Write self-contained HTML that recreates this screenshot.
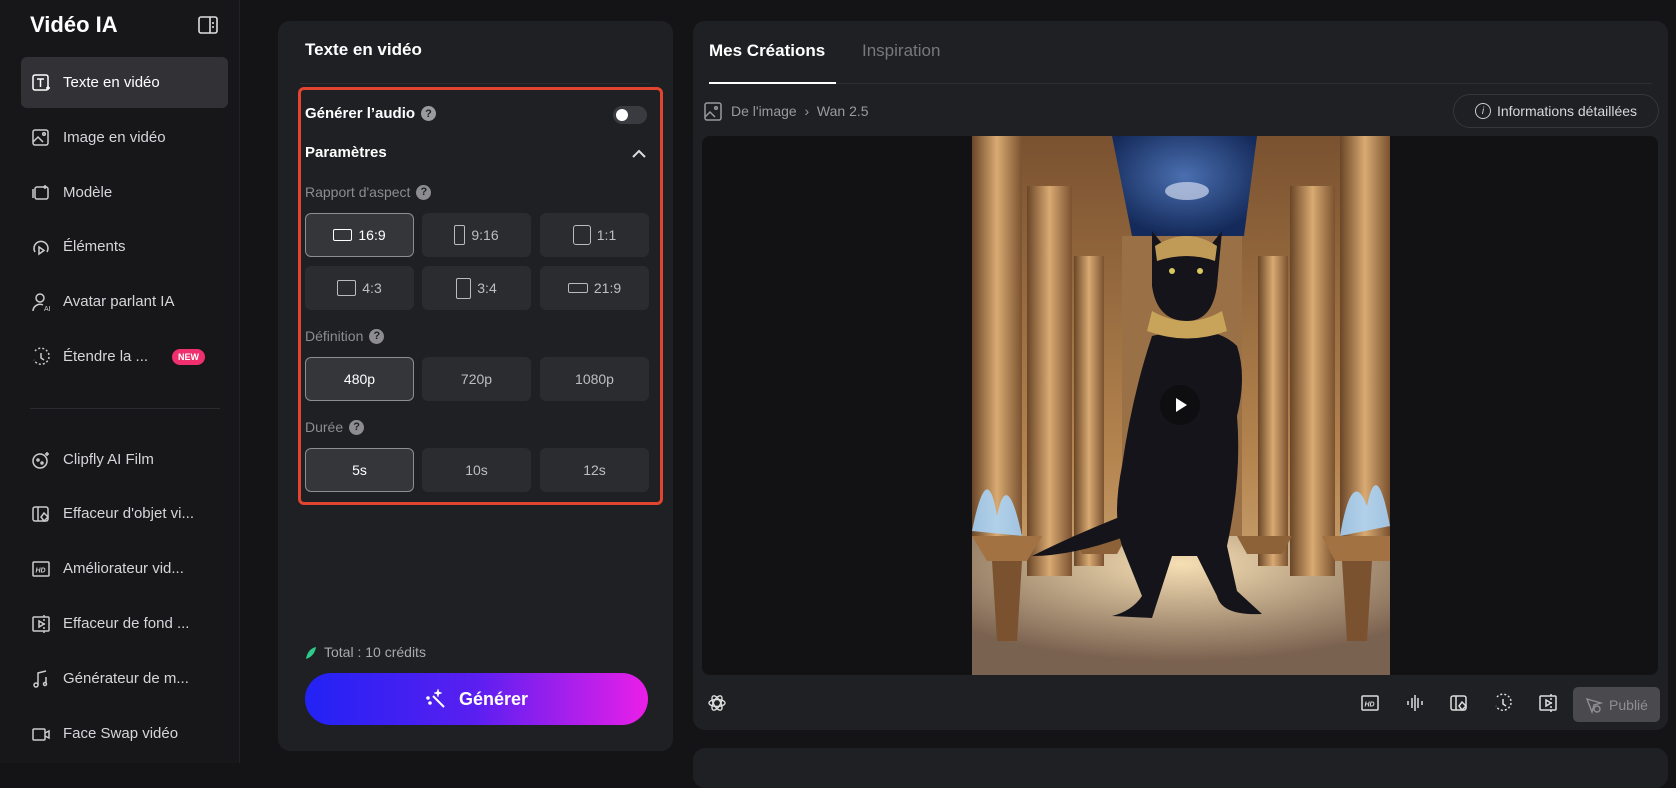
<!DOCTYPE html>
<html><head><meta charset="utf-8"><style>
*{box-sizing:border-box;margin:0;padding:0}
body{width:1676px;height:763px;background:#141417;font-family:"Liberation Sans",sans-serif;color:#e8e8ea;position:relative;overflow:hidden}
.abs{position:absolute}
.side{left:0;top:0;width:240px;height:763px;background:#17171a;border-right:1px solid #222226}
.title{left:30px;top:12px;font-size:22px;font-weight:bold;color:#fff}
.nav{left:21px;width:207px;height:51px;display:flex;align-items:center;font-size:15px;color:#d6d6d9;border-radius:6px}
.nav svg{position:absolute;left:10px;width:20px;height:20px}
.nav span{position:absolute;left:42px}
.panel{background:#1f2023;border-radius:12px}
.btn{position:absolute;width:109px;height:44px;background:#2b2c30;border-radius:6px;display:flex;align-items:center;justify-content:center;font-size:14px;color:#bdbdc2;gap:6px}
.btn.sel{background:#35363a;border:1px solid #8d8d92;color:#fff}
.lbl{position:absolute;left:305px;font-size:14px;color:#8c8c91;display:flex;align-items:center;gap:6px}
.q{display:inline-flex;width:15px;height:15px;border-radius:50%;background:#8c8c91;color:#1f2023;font-size:11px;font-weight:bold;align-items:center;justify-content:center}
.ic{position:absolute;top:693px;width:20px;height:20px}
</style></head><body>
<div class="abs side"></div>
<div class="abs title">Vidéo IA</div>
<svg class="abs" style="left:198px;top:16px" width="20" height="18" viewBox="0 0 20 18" fill="none" stroke="#ddd" stroke-width="1.6"><rect x="1" y="1" width="18" height="16" rx="2"/><line x1="12" y1="1" x2="12" y2="17"/><line x1="15" y1="6" x2="15" y2="8"/><line x1="15" y1="10" x2="15" y2="12"/></svg>

<div class="abs nav" style="top:57px;background:#323236;color:#fff"><svg viewBox="0 0 20 20" fill="none" stroke="#fff" stroke-width="1.5"><rect x="2" y="2" width="15" height="15" rx="2"/><path d="M6 6h7M9.5 6v8"/><path d="M15 15h4M17 13v4"/></svg><span>Texte en vidéo</span></div>
<div class="abs nav" style="top:112px"><svg viewBox="0 0 20 20" fill="none" stroke="#ccc" stroke-width="1.5"><rect x="2" y="2" width="15" height="15" rx="2"/><path d="M2 14l5-5 5 5"/><circle cx="13" cy="6" r="1.3"/></svg><span>Image en vidéo</span></div>
<div class="abs nav" style="top:167px"><svg viewBox="0 0 20 20" fill="none" stroke="#ccc" stroke-width="1.5"><rect x="4" y="4" width="13" height="12" rx="2"/><path d="M2 6v9"/><path d="M14 2v4M12 4h4"/></svg><span>Modèle</span></div>
<div class="abs nav" style="top:221px"><svg viewBox="0 0 20 20" fill="none" stroke="#ccc" stroke-width="1.5"><path d="M4 15a7 7 0 1 1 12 0"/><path d="M8 10v7l5-3.5z"/></svg><span>Éléments</span></div>
<div class="abs nav" style="top:276px"><svg viewBox="0 0 20 20" fill="none" stroke="#ccc" stroke-width="1.5"><circle cx="9" cy="6" r="4"/><path d="M2 19a7 7 0 0 1 10-6"/><text x="13" y="19" font-size="7" fill="#ccc" stroke="none">AI</text></svg><span>Avatar parlant IA</span></div>
<div class="abs nav" style="top:331px"><svg viewBox="0 0 20 20" fill="none" stroke="#ccc" stroke-width="1.5"><path d="M4 4a8 8 0 1 1-1 9" stroke-dasharray="2 2"/><path d="M10 6v5l3 2"/></svg><span>Étendre la ...</span><b style="position:absolute;left:151px;background:#f0306e;color:#fff;font-size:9px;padding:3px 6px;border-radius:9px">NEW</b></div>
<div class="abs" style="left:30px;top:408px;width:190px;height:1px;background:#2c2c30"></div>
<div class="abs nav" style="top:434px"><svg viewBox="0 0 20 20" fill="none" stroke="#ccc" stroke-width="1.5"><circle cx="9" cy="11" r="7"/><circle cx="7" cy="10" r="1"/><circle cx="11" cy="13" r="1"/><path d="M16 2v4M14 4h4"/></svg><span>Clipfly AI Film</span></div>
<div class="abs nav" style="top:488px"><svg viewBox="0 0 20 20" fill="none" stroke="#ccc" stroke-width="1.5"><rect x="2" y="3" width="15" height="14" rx="2"/><path d="M7 3v14"/><path d="M13 9l4 4-4 4-3-4z"/></svg><span>Effaceur d'objet vi...</span></div>
<div class="abs nav" style="top:543px"><svg viewBox="0 0 20 20" fill="none" stroke="#ccc" stroke-width="1.5"><rect x="2" y="3" width="16" height="14" rx="1"/><text x="4.5" y="13.5" font-size="7" font-style="italic" font-weight="bold" fill="#ccc" stroke="none">HD</text></svg><span>Améliorateur vid...</span></div>
<div class="abs nav" style="top:598px"><svg viewBox="0 0 20 20" fill="none" stroke="#ccc" stroke-width="1.5"><rect x="2" y="3" width="16" height="14" rx="1"/><path d="M8 7v6l5-3z"/><path d="M13 1v18" stroke-dasharray="2 2"/></svg><span>Effaceur de fond ...</span></div>
<div class="abs nav" style="top:653px"><svg viewBox="0 0 20 20" fill="none" stroke="#ccc" stroke-width="1.5"><path d="M7 16V4l8-2"/><circle cx="5" cy="16" r="2"/><path d="M15 8v6"/><circle cx="14" cy="15" r="1.5"/></svg><span>Générateur de m...</span></div>
<div class="abs nav" style="top:708px"><svg viewBox="0 0 20 20" fill="none" stroke="#ccc" stroke-width="1.5"><rect x="2" y="5" width="12" height="11" rx="1"/><path d="M14 9l4-2v7l-4-2"/></svg><span>Face Swap vidéo</span></div>

<div class="abs panel" style="left:278px;top:21px;width:395px;height:730px"></div>
<div class="abs" style="left:305px;top:40px;font-size:17px;font-weight:bold;color:#fff">Texte en vidéo</div>
<div class="abs" style="left:300px;top:83px;width:350px;height:1px;background:#2e2e32"></div>
<div class="abs" style="left:298px;top:87px;width:365px;height:418px;border:3px solid #e2442f;border-radius:6px"></div>
<div class="abs" style="left:305px;top:105px;font-size:15px;font-weight:bold;color:#fff;display:flex;align-items:center;gap:6px">Générer l’audio <span class="q" style="background:#9a9a9f">?</span></div>
<div class="abs" style="left:613px;top:106px;width:34px;height:18px;border-radius:9px;background:#3a3b40"><div style="position:absolute;left:3px;top:3px;width:12px;height:12px;border-radius:50%;background:#fff"></div></div>
<div class="abs" style="left:305px;top:144px;font-size:15px;font-weight:bold;color:#fff">Paramètres</div>
<svg class="abs" style="left:631px;top:148px" width="16" height="12" viewBox="0 0 16 12" fill="none" stroke="#ddd" stroke-width="2"><path d="M2 9l6-6 6 6"/></svg>
<div class="lbl" style="top:184px">Rapport d'aspect <span class="q">?</span></div>
<div class="btn sel" style="left:305px;top:213px"><span style="width:19px;height:12px;border:1.5px solid #fff;border-radius:2px"></span>16:9</div>
<div class="btn" style="left:422px;top:213px"><span style="width:11px;height:20px;border:1.5px solid #bbb;border-radius:2px"></span>9:16</div>
<div class="btn" style="left:540px;top:213px"><span style="width:18px;height:20px;border:1.5px solid #bbb;border-radius:3px"></span>1:1</div>
<div class="btn" style="left:305px;top:266px"><span style="width:19px;height:16px;border:1.5px solid #bbb;border-radius:2px"></span>4:3</div>
<div class="btn" style="left:422px;top:266px"><span style="width:15px;height:21px;border:1.5px solid #bbb;border-radius:2px"></span>3:4</div>
<div class="btn" style="left:540px;top:266px"><span style="width:20px;height:10px;border:1.5px solid #bbb;border-radius:2px"></span>21:9</div>
<div class="lbl" style="top:328px">Définition <span class="q">?</span></div>
<div class="btn sel" style="left:305px;top:357px">480p</div>
<div class="btn" style="left:422px;top:357px">720p</div>
<div class="btn" style="left:540px;top:357px">1080p</div>
<div class="lbl" style="top:419px">Durée <span class="q">?</span></div>
<div class="btn sel" style="left:305px;top:448px">5s</div>
<div class="btn" style="left:422px;top:448px">10s</div>
<div class="btn" style="left:540px;top:448px">12s</div>
<svg class="abs" style="left:305px;top:646px" width="12" height="14" viewBox="0 0 12 14"><path d="M1 13C2 6 6 2 11 1 10 7 7 11 1 13z" fill="#2fc98a"/></svg>
<div class="abs" style="left:324px;top:644px;font-size:14px;color:#a9a9ae">Total : 10 crédits</div>
<div class="abs" style="left:305px;top:673px;width:343px;height:52px;border-radius:26px;background:linear-gradient(90deg,#2222f4 0%,#5a1ff0 50%,#ea1fe8 100%);display:flex;align-items:center;justify-content:center;gap:12px;font-size:18px;font-weight:bold;color:#fff">
<svg width="22" height="22" viewBox="0 0 22 22" fill="none" stroke="#fff" stroke-width="2"><path d="M8 8l11 11"/><path d="M13 1l1 3 3 1-3 1-1 3-1-3-3-1 3-1z" fill="#fff" stroke-width="0.5"/><circle cx="3" cy="10" r="0.8" fill="#fff"/><circle cx="5" cy="15" r="0.8" fill="#fff"/></svg>Générer</div>

<div class="abs panel" style="left:693px;top:21px;width:975px;height:709px"></div>
<div class="abs" style="left:709px;top:41px;font-size:17px;font-weight:bold;color:#fff">Mes Créations</div>
<div class="abs" style="left:862px;top:41px;font-size:17px;color:#77777c">Inspiration</div>
<div class="abs" style="left:709px;top:83px;width:943px;height:1px;background:#2e2e32"></div>
<div class="abs" style="left:709px;top:82px;width:127px;height:2px;background:#fff"></div>
<svg class="abs" style="left:704px;top:102px" width="20" height="20" viewBox="0 0 20 20" fill="none" stroke="#999" stroke-width="1.5"><rect x="1" y="1" width="16" height="17" rx="2"/><path d="M1 15l5-5 5 5"/><circle cx="12" cy="6" r="1.3"/></svg>
<div class="abs" style="left:731px;top:103px;font-size:14px;color:#9a9a9f">De l'image &nbsp;›&nbsp; Wan 2.5</div>
<div class="abs" style="left:1453px;top:94px;width:206px;height:34px;border:1px solid #35363a;border-radius:17px;display:flex;align-items:center;justify-content:center;gap:6px;font-size:14px;color:#d8d8dc"><span style="width:16px;height:16px;border:1.5px solid #ccc;border-radius:50%;font-size:10px;font-style:italic;display:inline-flex;align-items:center;justify-content:center">i</span>Informations détaillées</div>
<div class="abs" style="left:702px;top:136px;width:956px;height:539px;background:#121215;border-radius:8px;overflow:hidden">
<svg style="position:absolute;left:270px;top:0" width="418" height="539" viewBox="0 0 418 539">
<defs><linearGradient id="bg" x1="0" y1="0" x2="0" y2="1"><stop offset="0" stop-color="#7a5230"/><stop offset=".6" stop-color="#b5854f"/><stop offset="1" stop-color="#d8b98c"/></linearGradient>
<radialGradient id="sky" cx=".5" cy=".4" r=".6"><stop offset="0" stop-color="#4a6fb0"/><stop offset="1" stop-color="#142a5a"/></radialGradient>
<linearGradient id="col" x1="0" x2="1"><stop offset="0" stop-color="#6a4628"/><stop offset=".5" stop-color="#d9aa72"/><stop offset="1" stop-color="#7a5230"/></linearGradient>
<radialGradient id="floor" cx=".5" cy=".2" r=".7"><stop offset="0" stop-color="#f6dfb4"/><stop offset="1" stop-color="#7a6250"/></radialGradient></defs>
<rect width="418" height="539" fill="url(#bg)"/>
<polygon points="140,0 285,0 272,100 160,100" fill="url(#sky)"/>
<ellipse cx="215" cy="55" rx="22" ry="9" fill="#cfd8ee" opacity=".7"/>
<rect x="150" y="100" width="120" height="400" fill="#9a7046"/>
<rect x="0" y="400" width="418" height="139" fill="url(#floor)"/>
<rect x="0" y="0" width="50" height="400" fill="url(#col)"/><rect x="368" y="0" width="50" height="400" fill="url(#col)"/>
<rect x="55" y="50" width="45" height="390" fill="url(#col)"/><rect x="318" y="50" width="45" height="390" fill="url(#col)"/>
<rect x="102" y="120" width="30" height="310" fill="url(#col)"/><rect x="286" y="120" width="30" height="310" fill="url(#col)"/>
<path d="M0 395 Q15 320 25 380 Q35 330 50 400z" fill="#a9d7ff" opacity=".85"/>
<path d="M368 400 Q380 330 395 370 Q405 320 418 390z" fill="#a9d7ff" opacity=".85"/>
<path d="M0 400h70l-15 25h-40z" fill="#a27242"/><path d="M350 400h68v25h-55z" fill="#a27242"/>
<path d="M100 400h55l-10 18h-35z" fill="#8e6238"/><path d="M265 400h55l-10 18h-35z" fill="#8e6238"/>
<path d="M20 425h30l-5 80h-20z" fill="#7a5230"/><path d="M370 425h30l-5 80h-20z" fill="#7a5230"/>
<g fill="#15141a">
<path d="M180 150 L180 95 L200 120 L230 120 L250 95 L245 150 Q240 185 215 185 Q185 185 180 150z"/>
<path d="M180 200 Q160 260 150 330 Q140 380 150 410 L170 460 Q160 475 140 480 L180 482 L200 420 L225 420 L245 460 Q250 480 290 478 L265 455 L255 410 Q270 340 265 280 Q275 240 265 210 Q240 185 180 200z"/>
<path d="M150 380 Q100 400 60 420 Q100 420 155 400z"/>
</g>
<path d="M180 175 Q215 195 250 175 L255 195 Q215 210 175 195z" fill="#c8a35a"/>
<path d="M183 110 Q215 90 245 110 L243 125 Q215 115 185 125z" fill="#c09b58"/>
<circle cx="200" cy="135" r="3" fill="#d8c860"/><circle cx="228" cy="135" r="3" fill="#d8c860"/>
</svg>
<div style="position:absolute;left:458px;top:249px;width:40px;height:40px;border-radius:50%;background:#0e0e10"><svg width="40" height="40" viewBox="0 0 40 40"><path d="M16 13v14l11-7z" fill="#fff"/></svg></div>
</div>
<svg class="ic" style="left:707px" viewBox="0 0 20 20" fill="none" stroke="#ddd" stroke-width="1.4"><ellipse cx="10" cy="10" rx="8" ry="3.5"/><ellipse cx="10" cy="10" rx="8" ry="3.5" transform="rotate(60 10 10)"/><ellipse cx="10" cy="10" rx="8" ry="3.5" transform="rotate(120 10 10)"/></svg>
<svg class="ic" style="left:1360px" viewBox="0 0 20 20" fill="none" stroke="#ddd" stroke-width="1.5"><rect x="2" y="3" width="16" height="14" rx="1"/><text x="4.5" y="13.5" font-size="7" font-style="italic" font-weight="bold" fill="#ddd" stroke="none">HD</text></svg>
<svg class="ic" style="left:1405px" viewBox="0 0 20 20" fill="none" stroke="#ddd" stroke-width="1.5"><path d="M3 8v4M7 5v10M10 2v16M13 5v10M17 8v4"/></svg>
<svg class="ic" style="left:1449px" viewBox="0 0 20 20" fill="none" stroke="#ddd" stroke-width="1.5"><rect x="2" y="3" width="15" height="14" rx="2"/><path d="M7 3v14"/><path d="M13 9l4 4-4 4-3-4z"/></svg>
<svg class="ic" style="left:1493px" viewBox="0 0 20 20" fill="none" stroke="#ddd" stroke-width="1.5"><path d="M4 4a8 8 0 1 1-1 9" stroke-dasharray="2 2"/><path d="M10 6v5l3 2"/></svg>
<svg class="ic" style="left:1538px" viewBox="0 0 20 20" fill="none" stroke="#ddd" stroke-width="1.5"><rect x="2" y="3" width="16" height="14" rx="1"/><path d="M8 7v6l5-3z"/><path d="M13 1v18" stroke-dasharray="2 2"/></svg>
<div class="abs" style="left:1573px;top:687px;width:87px;height:35px;background:#4a4a4e;border-radius:5px;display:flex;align-items:center;justify-content:center;gap:6px;font-size:14px;color:#8e8e93"><svg width="18" height="18" viewBox="0 0 18 18" fill="none" stroke="#8e8e93" stroke-width="1.4"><path d="M2 3l14 4-7 2-2 7z"/><circle cx="12" cy="13" r="3"/></svg>Publié</div>
<div class="abs panel" style="left:693px;top:748px;width:975px;height:40px"></div>
</body></html>
